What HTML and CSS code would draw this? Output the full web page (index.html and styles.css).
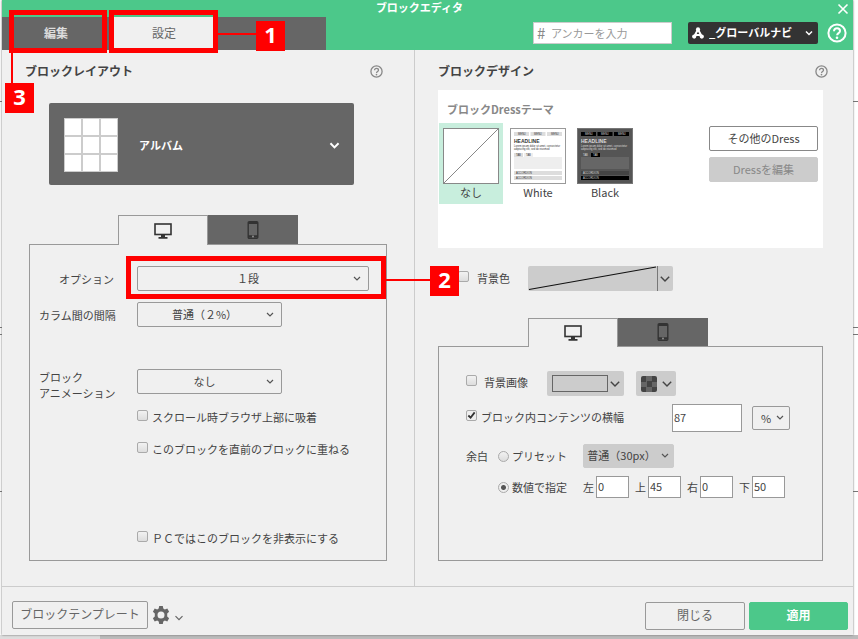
FILE: index.html
```html
<!DOCTYPE html>
<html lang="ja">
<head>
    <meta charset="UTF-8">
    <meta name="viewport" content="width=device-width, initial-scale=1">
    <title>ブロックエディタ</title>
    <link rel="stylesheet" href="styles.css">
</head>
<body>
    <!-- shared icons -->
    <svg class="sprite" aria-hidden="true">
        <symbol id="icon-chevron" viewBox="0 0 10 10"><path d="M1.5 3.2 5 6.7 8.5 3.2" fill="none" stroke="currentColor" stroke-width="1.2"/></symbol>
        <symbol id="icon-help" viewBox="0 0 20 20">
            <circle cx="10" cy="10" r="8.6" fill="none" stroke="currentColor" stroke-width="2"/>
            <path d="M7 8.2c0-1.9 1.3-3 3-3s3 1.1 3 2.7c0 2.2-2.9 2.3-2.9 4.4" fill="none" stroke="currentColor" stroke-width="2"/>
            <circle cx="10" cy="14.8" r="1.3" fill="currentColor"/>
        </symbol>
        <symbol id="icon-pc" viewBox="0 0 18 16">
            <rect x="1" y="1" width="16" height="10.5" fill="none" stroke="currentColor" stroke-width="1.6"/>
            <path d="M7 12h4v2h2.5v1.8h-9V14H7z" fill="currentColor"/>
        </symbol>
        <symbol id="icon-phone" viewBox="0 0 12 18">
            <rect x="1.2" y=".8" width="9.6" height="16.4" rx="1" fill="none" stroke="currentColor" stroke-width="1.4"/>
            <path d="M1 2h10M1 15.4h10" stroke="currentColor" stroke-width="2.2"/>
            <circle cx="6" cy="15.5" r=".9" fill="#999"/>
        </symbol>
    </svg>

    <div class="dialog">
        <header class="header">
            <div class="title-bar">
                <h1 class="title">ブロックエディタ</h1>
                <button class="icon-btn" type="button" aria-label="閉じる">
                    <svg width="12" height="12" viewBox="0 0 12 12"><path d="M1.5 1.5l9 9M10.5 1.5l-9 9" stroke="currentColor" stroke-width="1.6"/></svg>
                </button>
            </div>
            <div class="header-row">
                <nav class="tabs">
                    <div class="tab-slot">
                        <button class="tab" type="button">編集</button>
                        <div class="frame frame-edit"></div>
                        <div class="line line-edit"></div>
                        <div class="badge badge-edit">3</div>
                    </div>
                    <div class="tab-slot">
                        <button class="tab tab-active" type="button">設定</button>
                        <div class="frame frame-setting"></div>
                        <div class="line line-setting"></div>
                        <div class="badge badge-setting">1</div>
                    </div>
                    <div class="tab-slot"></div>
                </nav>
                <div class="tools">
                    <label class="anchor"><span class="hash">#</span><input class="anchor-input" type="text" placeholder="アンカーを入力" aria-label="アンカー"></label>
                    <label class="nav-select">
                        <svg width="12" height="12" viewBox="0 0 12 12"><path d="M6 2.6 2.2 9.6M6 2.6l3.8 7M3.5 8h5" fill="none" stroke="currentColor" stroke-width="2"/><circle cx="6" cy="2.4" r="2.1" fill="currentColor"/><circle cx="2.2" cy="9.6" r="2.1" fill="currentColor"/><circle cx="9.8" cy="9.6" r="2.1" fill="currentColor"/></svg>
                        <select class="nav-field" aria-label="アンカー先"><option>_グローバルナビ</option></select>
                    </label>
                    <button class="icon-btn" type="button" aria-label="ヘルプ"><svg width="20" height="20"><use href="#icon-help"/></svg></button>
                </div>
            </div>
        </header>

        <main class="panes">
            <section class="pane pane-layout">
                <div class="pane-head">
                    <h2 class="pane-title">ブロックレイアウト</h2>
                    <button class="icon-btn" type="button" aria-label="ヘルプ"><svg width="13" height="13"><use href="#icon-help"/></svg></button>
                </div>

                <button class="layout-card" type="button">
                    <span class="grid-icon"><i></i><i></i><i></i><i></i><i></i><i></i><i></i><i></i><i></i></span>
                    <span class="layout-name">アルバム</span>
                    <svg width="11" height="11" viewBox="0 0 10 10"><path d="M1.3 3 5 6.7 8.7 3" fill="none" stroke="currentColor" stroke-width="1.8"/></svg>
                </button>

                <div class="device-tabs">
                    <button class="device device-active" type="button" aria-label="PC"><svg width="18" height="16"><use href="#icon-pc"/></svg></button>
                    <button class="device" type="button" aria-label="スマートフォン"><svg width="12" height="18"><use href="#icon-phone"/></svg></button>
                </div>
                <div class="panel panel-layout">
                    <div class="row">
                        <label class="row-label label-right" for="option">オプション</label>
                        <div class="option-slot">
                            <select class="select" id="option"><option>１段</option></select>
                            <div class="frame frame-option"></div>
                            <div class="line line-option"></div>
                            <div class="badge badge-option">2</div>
                        </div>
                    </div>
                    <div class="row">
                        <label class="row-label" for="gap">カラム間の間隔</label>
                        <select class="select select-short" id="gap"><option>普通（２%）</option></select>
                    </div>
                    <div class="row row-anim">
                        <label class="row-label" for="anim">ブロック<br>アニメーション</label>
                        <select class="select select-short" id="anim"><option>なし</option></select>
                    </div>
                    <div class="checks">
                        <label class="check"><input type="checkbox" class="box">スクロール時ブラウザ上部に吸着</label>
                        <label class="check"><input type="checkbox" class="box">このブロックを直前のブロックに重ねる</label>
                        <label class="check check-last"><input type="checkbox" class="box">ＰＣではこのブロックを非表示にする</label>
                    </div>
                </div>
            </section>

            <section class="pane pane-design">
                <div class="pane-head">
                    <h2 class="pane-title">ブロックデザイン</h2>
                    <button class="icon-btn" type="button" aria-label="ヘルプ"><svg width="13" height="13"><use href="#icon-help"/></svg></button>
                </div>

                <div class="dress">
                    <h3 class="dress-title">ブロックDressテーマ</h3>
                    <div class="dress-body">
                        <button class="theme theme-active" type="button">
                            <svg width="56" height="56" viewBox="0 0 56 56"><rect x=".5" y=".5" width="55" height="55" fill="#fff" stroke="#888"/><path d="M1 55 55 1" stroke="#888"/></svg>
                            なし
                        </button>
                        <button class="theme theme-white" type="button">
                            <svg width="56" height="56" viewBox="0 0 56 56">
                                <rect class="t-bg" x=".5" y=".5" width="55" height="55"/>
                                <path class="t-menu" d="M4 4h15v4H4zM20.5 4h15v4h-15zM37 4h15v4H37zM4 25h9v4H4z"/>
                                <path class="t-tab" d="M14 25h9v4h-9z"/>
                                <text class="t-tiny" x="8" y="7">MENU</text><text class="t-tiny" x="24" y="7">MENU</text><text class="t-tiny" x="41" y="7">MENU</text>
                                <text class="t-head" x="4" y="15">HEADLINE</text>
                                <text class="t-tiny" x="4" y="19">Lorem ipsum dolor sit amet, consectetur</text>
                                <text class="t-tiny" x="4" y="22">adipiscing elit, sed do eiusmod</text>
                                <text class="t-tiny" x="6" y="28">TAB</text><text class="t-tiny" x="16" y="28">TAB</text>
                                <path class="t-box" d="M4 29h48v12H4z"/>
                                <path class="t-acc" d="M4 43h48v4H4z"/>
                                <path class="t-acc2" d="M4 48h48v4H4z"/>
                                <text class="t-tiny" x="6" y="46">ACCORDION</text><text class="t-tiny" x="6" y="51">ACCORDION</text>
                            </svg>
                            White
                        </button>
                        <button class="theme theme-black" type="button">
                            <svg width="56" height="56" viewBox="0 0 56 56">
                                <rect class="t-bg" x=".5" y=".5" width="55" height="55"/>
                                <path class="t-menu" d="M4 4h15v4H4zM20.5 4h15v4h-15zM37 4h15v4H37z"/>
                                <path class="t-tab" d="M14 25h9v4h-9z"/>
                                <text class="t-tiny" x="8" y="7">MENU</text><text class="t-tiny" x="24" y="7">MENU</text><text class="t-tiny" x="41" y="7">MENU</text>
                                <text class="t-head" x="4" y="15">HEADLINE</text>
                                <text class="t-tiny" x="4" y="19">Lorem ipsum dolor sit amet, consectetur</text>
                                <text class="t-tiny" x="4" y="22">adipiscing elit, sed do eiusmod</text>
                                <text class="t-tiny" x="6" y="28">TAB</text><text class="t-tiny" x="16" y="28">TAB</text>
                                <path class="t-box" d="M4 29h48v12H4z"/>
                                <path class="t-acc" d="M4 43h48v4H4z"/>
                                <path class="t-acc2" d="M4 48h48v4H4z"/>
                                <text class="t-tiny" x="6" y="46">ACCORDION</text><text class="t-tiny" x="6" y="51">ACCORDION</text>
                            </svg>
                            Black
                        </button>
                        <div class="dress-actions">
                            <button class="dress-btn" type="button">その他のDress</button>
                            <button class="dress-btn" type="button" disabled>Dressを編集</button>
                        </div>
                    </div>
                </div>

                <div class="bg-row">
                    <label class="check bg-check"><input type="checkbox" class="box">背景色</label>
                    <button class="picker picker-color" type="button" aria-label="背景色を選択">
                        <svg class="no-color" viewBox="0 0 130 25" preserveAspectRatio="none"><path d="M1 23.5 129 1" stroke="#111" stroke-width="1.2"/></svg>
                        <svg width="12" height="12"><use href="#icon-chevron"/></svg>
                    </button>
                </div>

                <div class="device-tabs device-tabs-design">
                    <button class="device device-active" type="button" aria-label="PC"><svg width="18" height="16"><use href="#icon-pc"/></svg></button>
                    <button class="device" type="button" aria-label="スマートフォン"><svg width="12" height="18"><use href="#icon-phone"/></svg></button>
                </div>
                <div class="panel panel-design">
                    <div class="line-row">
                        <label class="check image-check"><input type="checkbox" class="box">背景画像</label>
                        <button class="picker picker-image" type="button" aria-label="背景画像を選択"><span class="swatch"></span><svg width="12" height="12"><use href="#icon-chevron"/></svg></button>
                        <button class="picker picker-alpha" type="button" aria-label="透過を選択"><span class="checker"></span><svg width="12" height="12"><use href="#icon-chevron"/></svg></button>
                    </div>
                    <div class="line-row width-row">
                        <label class="check width-check"><input type="checkbox" class="box" checked>ブロック内コンテンツの横幅</label>
                        <input class="field field-width" type="text" value="87" aria-label="横幅">
                        <select class="select select-unit" aria-label="単位"><option>%</option></select>
                    </div>
                    <div class="line-row preset-row">
                        <span class="pad-label">余白</span>
                        <label class="check radio-label"><input type="radio" class="radio" name="padding">プリセット</label>
                        <select class="select select-preset" aria-label="プリセット" disabled><option>普通（30px）</option></select>
                    </div>
                    <div class="line-row value-row">
                        <label class="check radio-label value-label"><input type="radio" class="radio" name="padding" checked>数値で指定</label>
                        <label class="side">左<input class="field" type="text" value="0"></label>
                        <label class="side">上<input class="field" type="text" value="45"></label>
                        <label class="side">右<input class="field" type="text" value="0"></label>
                        <label class="side">下<input class="field" type="text" value="50"></label>
                    </div>
                </div>
            </section>
        </main>

        <footer class="footer">
            <button class="btn btn-template" type="button">ブロックテンプレート</button>
            <button class="icon-btn gear-btn" type="button" aria-label="設定メニュー">
                <svg width="18" height="18" viewBox="0 0 18 18"><path fill="currentColor" fill-rule="evenodd" d="M7.2 0h3.6l.5 2.5 1.5.9 2.5-.8 1.8 3.1-1.9 1.8v3l1.9 1.8-1.8 3.1-2.5-.8-1.5.9-.5 2.5H7.2l-.5-2.5-1.5-.9-2.5.8L.9 12.3l1.9-1.8v-3L.9 5.7l1.8-3.1 2.5.8 1.5-.9zM9 5.5a3.5 3.5 0 1 0 0 7 3.5 3.5 0 0 0 0-7z"/></svg>
                <svg class="gear-arrow" width="10" height="10"><use href="#icon-chevron"/></svg>
            </button>
            <div class="footer-actions">
                <button class="btn" type="button">閉じる</button>
                <button class="btn btn-apply" type="button">適用</button>
            </div>
        </footer>
    </div>
</body>
</html>
```

FILE: styles.css
```css
* {
    box-sizing: border-box;
}
body {
    margin: 0;
    min-height: 100vh;
    display: flex;
    padding: 0 5px 4px 2px;
    /* page edges behind the dialog */
    background:
        linear-gradient(#bbb, #bbb) 100% 100% / calc(100% - 100px) 4px no-repeat,
        linear-gradient(#ddd, #ddd) 0 100% / 100px 4px no-repeat,
        linear-gradient(#777, #777) 0 101px / 100% 1px no-repeat,
        linear-gradient(#777, #777) 0 327px / 100% 1px no-repeat,
        linear-gradient(#777, #777) 0 334px / 100% 1px no-repeat,
        linear-gradient(#777, #777) 0 491px / 100% 1px no-repeat,
        #fff;
    font-family: "Noto Sans CJK JP", sans-serif;
    font-size: 11px;
    line-height: 16px;
    color: #444;
}
h1, h2, h3 {
    margin: 0;
}
button, input, select {
    font: inherit;
    color: inherit;
    margin: 0;
}
button {
    padding: 0;
    border: none;
    background: none;
    cursor: pointer;
}
svg {
    display: block;
    flex: none;
}
.sprite {
    position: absolute;
    width: 0;
    height: 0;
}
.dialog {
    flex: 1;
    display: flex;
    flex-direction: column;
    background: #f0f0f0;
    box-shadow: 0 0 2px #666;
}

/* header */
.header {
    background: #4cc88a;
    color: #fff;
}
.title-bar {
    display: flex;
    align-items: center;
    height: 17px;
    padding-right: 4px;
}
.title {
    flex: 1;
    text-align: center;
    font-size: 11px;
    line-height: 14px;
    padding-bottom: 4px;
}
.icon-btn {
    display: flex;
    align-items: center;
    color: inherit;
}
.header-row {
    display: flex;
    justify-content: space-between;
    height: 33px;
}
.tabs {
    display: flex;
}
.tab-slot {
    position: relative;
    display: flex;
    width: 108px;
    background: #666;
}
.tab {
    flex: 1;
    padding-bottom: 2px;
    color: #ddd;
    font-size: 12px;
    font-weight: bold;
}
.tab-active {
    background: #f0f0f0;
    color: #666;
    font-weight: normal;
}
.tools {
    display: flex;
    align-items: center;
    padding: 0 6px 1px 0;
}
.anchor {
    display: flex;
    align-items: center;
    width: 139px;
    height: 22px;
    padding: 0 3px;
    margin-right: 16px;
    background: #fff;
    border: 1px solid #ccc;
    color: #888;
}
.hash {
    width: 14px;
    font-size: 15px;
}
.anchor-input {
    flex: 1;
    min-width: 0;
    padding: 0;
    border: none;
    outline: none;
    background: none;
}
.anchor-input::placeholder {
    color: #999;
}
.nav-select {
    display: flex;
    align-items: center;
    width: 130px;
    height: 22px;
    padding: 0 4px;
    margin-right: 9px;
    background: #333;
    border-radius: 2px;
}
.nav-field {
    appearance: none;
    flex: 1;
    min-width: 0;
    height: 20px;
    padding: 0 0 2px 5px;
    border: none;
    font-weight: bold;
    background: url("data:image/svg+xml,%3Csvg xmlns='http://www.w3.org/2000/svg' width='10' height='10'%3E%3Cpath d='M2 3.5 5 6.5 8 3.5' fill='none' stroke='%23fff' stroke-width='1.5'/%3E%3C/svg%3E") right center no-repeat;
}

/* numbered callouts */
.frame {
    position: absolute;
    border: 5px solid #f00;
    pointer-events: none;
    z-index: 2;
}
.line {
    position: absolute;
    background: #f00;
    z-index: 2;
}
.badge {
    position: absolute;
    width: 29px;
    height: 30px;
    background: #f00;
    color: #fff;
    font-family: "Open Sans", sans-serif;
    font-size: 22px;
    font-weight: bold;
    line-height: 26px;
    text-align: center;
    z-index: 3;
}
.frame-edit {
    inset: -7px 3px -3px 7px;
}
.line-edit {
    left: 9px;
    top: 36px;
    width: 2px;
    height: 30px;
}
.badge-edit {
    left: 3px;
    top: 66px;
}
.frame-setting {
    inset: -7px 0 -3px -1px;
}
.line-setting {
    left: 108px;
    top: 16px;
    width: 38px;
    height: 2px;
}
.badge-setting {
    left: 146px;
    top: 4px;
}
.frame-option {
    inset: -10px -17px -8px -11px;
}
.line-option {
    left: 100%;
    top: 13px;
    width: 61px;
    height: 2px;
    margin-left: 17px;
}
.badge-option {
    left: 100%;
    top: 0;
    margin-left: 61px;
}

/* panes */
.panes {
    flex: 1;
    display: grid;
    grid-template-columns: 413fr 438fr;
}
.pane {
    display: flex;
    flex-direction: column;
    padding: 12px 27px 25px;
}
.pane-layout {
    border-right: 1px solid #ccc;
}
.pane-design {
    padding-left: 23px;
    padding-right: 30px;
}
.pane-head {
    display: flex;
    justify-content: space-between;
    align-items: center;
    height: 18px;
    color: #888;
}
.pane-layout .pane-head {
    margin: 0 4px 0 -4px;
}
.pane-design .pane-head {
    margin-right: -5px;
}
.pane-title {
    font-size: 12px;
    font-weight: bold;
    color: #444;
}
.layout-card {
    display: flex;
    align-items: center;
    height: 82px;
    margin: 23px 33px 0 20px;
    padding: 2px 14px 0 15px;
    background: #666;
    border-radius: 2px;
    color: #fff;
    text-align: left;
}
.grid-icon {
    display: grid;
    grid-template-columns: repeat(3, 1fr);
    gap: 2px;
    width: 54px;
    height: 54px;
    padding: 1px;
    background: #ccc;
}
.grid-icon i {
    background: #fff;
}
.layout-name {
    flex: 1;
    padding-left: 21px;
    font-weight: bold;
}
.device-tabs {
    display: flex;
    margin: 30px 0 -1px 89px;
}
.device-tabs-design {
    margin-top: 27px;
    margin-left: 90px;
}
.device {
    position: relative;
    display: flex;
    align-items: center;
    justify-content: center;
    width: 90px;
    height: 30px;
    background: #666;
    border-bottom: 1px solid #999;
    color: #333;
}
.device-active {
    background: #f0f0f0;
    border: 1px solid #999;
    border-bottom: none;
}
.device-tabs-design .device {
    height: 29px;
}
.panel {
    flex: 1;
    border: 1px solid #999;
}

/* layout settings */
.panel-layout {
    padding: 21px 17px 13px 0;
}
.row {
    display: flex;
    align-items: center;
    margin-bottom: 11px;
}
.row-label {
    width: 107px;
    padding-left: 9px;
}
.label-right {
    padding-right: 23px;
    text-align: right;
}
.option-slot {
    position: relative;
    flex: 1;
}
.row-anim {
    align-items: flex-start;
    margin: 42px 0 8px;
}
.select {
    appearance: none;
    width: 100%;
    height: 25px;
    padding: 0 18px 2px 8px;
    border: 1px solid #999;
    border-radius: 2px;
    text-align: center;
    text-align-last: center;
    background: url("data:image/svg+xml,%3Csvg xmlns='http://www.w3.org/2000/svg' width='10' height='10'%3E%3Cpath d='M2 3 5 6 8 3' fill='none' stroke='%23555' stroke-width='1.2'/%3E%3C/svg%3E") right 6px center no-repeat;
}
.select-short {
    width: 145px;
}
.checks {
    display: flex;
    flex-direction: column;
    gap: 16px;
    padding-left: 107px;
}
.check {
    display: flex;
    align-items: center;
    gap: 4px;
    white-space: nowrap;
}
.check-last {
    margin-top: 57px;
}
.box, .radio {
    appearance: none;
    flex: none;
    width: 11px;
    height: 11px;
    margin-bottom: 3px;
    border: 1px solid #aaa;
    border-radius: 2px;
    background: linear-gradient(#f2f2f2, #ddd);
}
.box:checked {
    background: url("data:image/svg+xml,%3Csvg xmlns='http://www.w3.org/2000/svg' viewBox='0 0 10 10'%3E%3Cpath d='M1.5 5 4 7.5 8.5 1.5' fill='none' stroke='%23333' stroke-width='2'/%3E%3C/svg%3E") center / 9px no-repeat, #eee;
}
.radio {
    border-radius: 50%;
    margin-bottom: 0;
}
.radio:checked {
    background: radial-gradient(circle, #555 0 2px, #eee 3px);
}

/* dress themes */
.dress {
    margin-top: 10px;
    padding: 11px 5px 44px 1px;
    background: #fff;
}
.dress-title {
    padding-left: 8px;
    font-size: 11px;
    font-weight: bold;
    color: #888;
}
.dress-body {
    display: flex;
    gap: 3px;
    margin-top: 6px;
}
.theme {
    display: flex;
    flex-direction: column;
    align-items: center;
    width: 64px;
    height: 81px;
    padding-top: 5px;
}
.theme-active {
    background: #c8eedd;
}
.t-tiny, .t-head {
    font-family: "Liberation Sans", sans-serif;
    font-size: 2.6px;
}
.t-head {
    font-size: 5px;
    font-weight: bold;
}
.theme-white .t-bg {
    fill: #fff;
    stroke: #999;
}
.theme-white .t-menu, .theme-white .t-acc, .theme-white .t-acc2 {
    fill: #ddd;
}
.theme-white .t-box, .theme-white .t-tab {
    fill: #eee;
}
.theme-white text {
    fill: #333;
}
.theme-black .t-bg {
    fill: #555;
    stroke: #777;
}
.theme-black .t-menu, .theme-black .t-tab, .theme-black .t-acc2 {
    fill: #000;
}
.theme-black .t-box {
    fill: #666;
}
.theme-black .t-acc {
    fill: #444;
}
.theme-black text {
    fill: #ddd;
}
.dress-actions {
    display: flex;
    flex-direction: column;
    gap: 6px;
    width: 109px;
    margin-left: auto;
    padding-top: 3px;
}
.dress-btn {
    height: 25px;
    padding-bottom: 2px;
    border: 1px solid #888;
    border-radius: 2px;
    background: #fff;
}
.dress-btn:disabled {
    border-color: #ccc;
    background: #ccc;
    color: #888;
}

/* background and padding */
.bg-row {
    display: flex;
    align-items: center;
    margin-top: 18px;
    padding-left: 20px;
}
.bg-check {
    gap: 8px;
    width: 70px;
    padding-bottom: 2px;
}
.picker {
    display: flex;
    align-items: center;
    justify-content: space-between;
    height: 25px;
    padding: 0 3px 0 5px;
    border-radius: 2px;
    background: #ccc;
}
.picker-color {
    width: 145px;
    padding: 0 2px 0 0;
}
.no-color {
    width: 130px;
    height: 25px;
    border-right: 1px solid #777;
}
.panel-design {
    padding: 24px 27px;
}
.line-row {
    display: flex;
    align-items: center;
}
.image-check {
    gap: 7px;
    width: 81px;
    padding-bottom: 4px;
}
.picker-image {
    width: 77px;
    margin-right: 12px;
}
.picker-alpha {
    width: 40px;
}
.swatch {
    width: 56px;
    height: 17px;
    border: 1px solid #666;
}
.checker {
    width: 16px;
    height: 16px;
    border-radius: 2px;
    background: conic-gradient(#666 25%, #444 0 50%, #666 0 75%, #444 0) 0 0 / 11px 11px;
}
.width-row {
    margin-top: 8px;
}
.width-check {
    width: 206px;
    padding-bottom: 2px;
}
.field {
    width: 33px;
    height: 22px;
    padding: 0 1px 2px;
    border: 1px solid #999;
    background: #fff;
}
.field-width {
    width: 70px;
    height: 28px;
    margin-right: 10px;
}
.select-unit {
    width: 38px;
    height: 24px;
    padding: 0 16px 0 6px;
    background-position: right 4px center;
}
.preset-row {
    margin-top: 12px;
}
.pad-label {
    width: 32px;
}
.radio-label {
    gap: 3px;
    width: 85px;
}
.value-label {
    margin-left: 32px;
}
.select-preset {
    width: 91px;
    height: 24px;
    padding: 0 14px 2px 0;
    border-color: #ccc;
    background-color: #ccc;
    background-position: right 3px center;
    opacity: 1;
}
.value-row {
    margin-top: 8px;
}
.side {
    display: flex;
    align-items: center;
    gap: 2px;
    margin-right: 6px;
}

/* footer */
.footer {
    display: flex;
    align-items: center;
    height: 49px;
    padding: 8px 5px 0 10px;
    border-top: 1px solid #ccc;
}
.btn {
    width: 100px;
    height: 28px;
    margin-top: 2px;
    padding-bottom: 2px;
    border: 1px solid #999;
    border-radius: 2px;
    font-size: 12px;
    color: #666;
}
.btn-template {
    width: 136px;
    margin-top: 0;
}
.gear-btn {
    gap: 4px;
    margin-left: 4px;
    color: #666;
}
.gear-arrow {
    margin-top: 6px;
}
.footer-actions {
    display: flex;
    gap: 4px;
    margin-left: auto;
}
.btn-apply {
    width: 99px;
    border-color: #4cc88a;
    background: #4cc88a;
    color: #fff;
    font-weight: bold;
}
```
